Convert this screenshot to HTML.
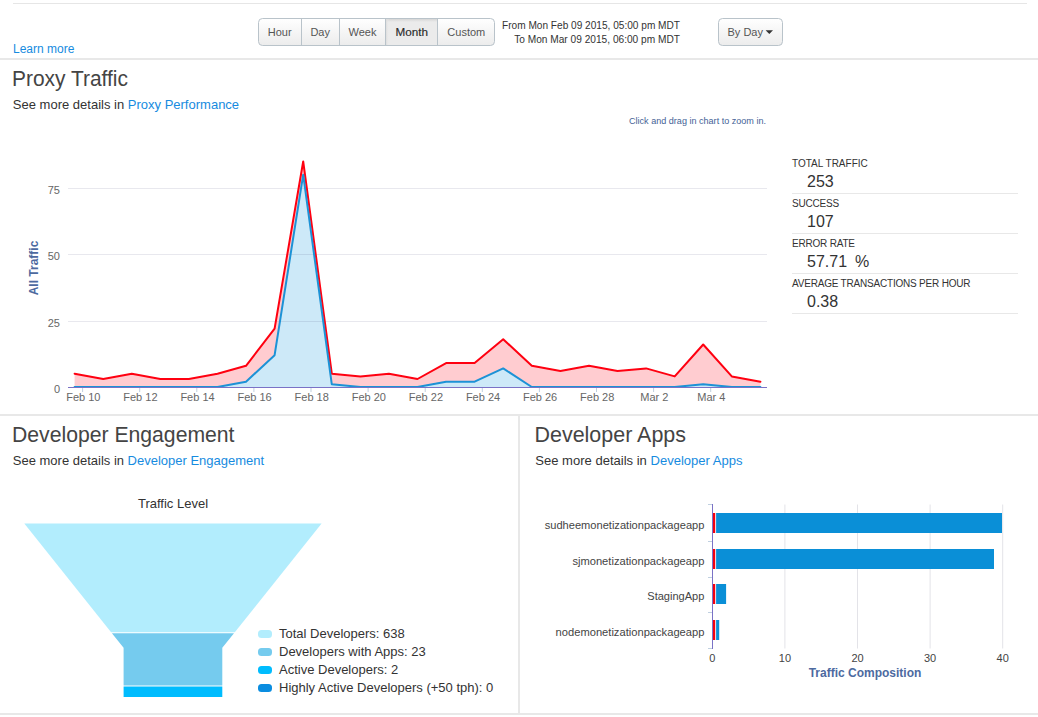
<!DOCTYPE html>
<html><head><meta charset="utf-8">
<style>
html,body{margin:0;padding:0;background:#fff;width:1038px;height:717px;overflow:hidden}
svg{display:block;font-family:"Liberation Sans",sans-serif}
.t{fill:#333}
.lk{fill:#168be0}
</style></head><body>
<svg width="1038" height="717" viewBox="0 0 1038 717">
<defs>
<linearGradient id="btn" x1="0" y1="0" x2="0" y2="1">
<stop offset="0" stop-color="#ffffff"/><stop offset="1" stop-color="#ececec"/>
</linearGradient>
<linearGradient id="btnA" x1="0" y1="0" x2="0" y2="1">
<stop offset="0" stop-color="#e4e4e4"/><stop offset="1" stop-color="#efefef"/>
</linearGradient>
<linearGradient id="shT" x1="0" y1="0" x2="0" y2="1"><stop offset="0" stop-color="#d6d6d6"/><stop offset="1" stop-color="#ebebeb"/></linearGradient>
<linearGradient id="shL" x1="0" y1="0" x2="1" y2="0"><stop offset="0" stop-color="#dcdcdc"/><stop offset="1" stop-color="#ebebeb" stop-opacity="0"/></linearGradient>
</defs>

<!-- page lines -->
<rect x="13" y="3" width="1014" height="1" fill="#e6e6e6"/>
<rect x="0" y="58" width="1038" height="2" fill="#e8e8e8"/>
<rect x="0" y="414" width="1038" height="2" fill="#e8e8e8"/>
<rect x="518" y="416" width="2" height="297" fill="#e8e8e8"/>
<rect x="0" y="713" width="1038" height="2" fill="#e8e8e8"/>

<text x="13" y="53" font-size="12" class="lk">Learn more</text>

<!-- button group -->
<g id="btns">
<rect x="258.5" y="18.5" width="236" height="27" rx="4" fill="url(#btn)" stroke="#b9c3ca"/>
<rect x="386" y="19" width="51" height="26" fill="#ebebeb"/>
<rect x="386" y="19" width="51" height="3" fill="url(#shT)"/>
<rect x="386" y="19" width="3" height="26" fill="url(#shL)"/>
<rect x="301" y="18" width="1" height="28" fill="#b9c3ca"/>
<rect x="339" y="18" width="1" height="28" fill="#b9c3ca"/>
<rect x="385" y="18" width="1" height="28" fill="#b9c3ca"/>
<rect x="437" y="18" width="1" height="28" fill="#b9c3ca"/>
<text x="279.7" y="35.5" font-size="11" fill="#555" text-anchor="middle">Hour</text>
<text x="320.2" y="35.5" font-size="11" fill="#555" text-anchor="middle">Day</text>
<text x="362.5" y="35.5" font-size="11" fill="#555" text-anchor="middle">Week</text>
<text x="395.6" y="35.7" font-size="11" fill="#2a2a2a" stroke="#2a2a2a" stroke-width="0.15" textLength="32.5" lengthAdjust="spacingAndGlyphs">Month</text>
<text x="466.3" y="35.5" font-size="11" fill="#555" text-anchor="middle">Custom</text>
</g>

<text x="502" y="28.5" font-size="10" class="t" textLength="178" lengthAdjust="spacingAndGlyphs">From Mon Feb 09 2015, 05:00 pm MDT</text>
<text x="514.2" y="42.5" font-size="10" class="t" textLength="165.8" lengthAdjust="spacingAndGlyphs">To Mon Mar 09 2015, 06:00 pm MDT</text>

<rect x="718.5" y="18.5" width="64" height="27" rx="4" fill="url(#btn)" stroke="#b9c3ca"/>
<text x="727.5" y="35.5" font-size="11" fill="#555">By Day</text>
<path d="M765.6 30.3 L773 30.3 L769.3 34 Z" fill="#333"/>

<!-- Proxy traffic -->
<text x="12" y="85.8" font-size="22" fill="#444" textLength="116" lengthAdjust="spacingAndGlyphs">Proxy Traffic</text>
<text x="12.8" y="108.9" font-size="13.6" class="t" textLength="226.3" lengthAdjust="spacingAndGlyphs">See more details in <tspan class="lk">Proxy Performance</tspan></text>

<g id="chart1">
<path d="M74.6 373.7 L103.2 379.0 L131.8 373.7 L160.3 379.0 L188.9 379.0 L217.5 373.7 L246.0 365.8 L274.6 328.6 L303.2 161.5 L331.8 373.7 L360.4 376.4 L388.9 373.7 L417.5 379.0 L446.1 363.1 L474.6 363.1 L503.2 339.2 L531.8 365.8 L560.4 371.1 L589.0 365.8 L617.5 371.1 L646.1 368.4 L674.7 376.4 L703.2 344.5 L731.8 376.4 L760.4 381.7 L760.4 387.0 L731.8 387.0 L703.2 384.3 L674.7 387.0 L646.1 387.0 L617.5 387.0 L589.0 387.0 L560.4 387.0 L531.8 387.0 L503.2 368.4 L474.6 381.7 L446.1 381.7 L417.5 387.0 L388.9 387.0 L360.4 387.0 L331.8 384.3 L303.2 174.7 L274.6 355.2 L246.0 381.7 L217.5 387.0 L188.9 387.0 L160.3 387.0 L131.8 387.0 L103.2 387.0 L74.6 387.0 Z" fill="#ffccd0"/>
<path d="M74.6 387.0 L103.2 387.0 L131.8 387.0 L160.3 387.0 L188.9 387.0 L217.5 387.0 L246.0 381.7 L274.6 355.2 L303.2 174.7 L331.8 384.3 L360.4 387.0 L388.9 387.0 L417.5 387.0 L446.1 381.7 L474.6 381.7 L503.2 368.4 L531.8 387.0 L560.4 387.0 L589.0 387.0 L617.5 387.0 L646.1 387.0 L674.7 387.0 L703.2 384.3 L731.8 387.0 L760.4 387.0 L760.4 387 L74.6 387 Z" fill="#cde9f8"/>
<rect x="68" y="188" width="699" height="1" fill="#1e1e5a" fill-opacity="0.1"/>
<rect x="68" y="254" width="699" height="1" fill="#1e1e5a" fill-opacity="0.1"/>
<rect x="68" y="321" width="699" height="1" fill="#1e1e5a" fill-opacity="0.1"/>
<path d="M74.6 373.7 L103.2 379.0 L131.8 373.7 L160.3 379.0 L188.9 379.0 L217.5 373.7 L246.0 365.8 L274.6 328.6 L303.2 161.5 L331.8 373.7 L360.4 376.4 L388.9 373.7 L417.5 379.0 L446.1 363.1 L474.6 363.1 L503.2 339.2 L531.8 365.8 L560.4 371.1 L589.0 365.8 L617.5 371.1 L646.1 368.4 L674.7 376.4 L703.2 344.5 L731.8 376.4 L760.4 381.7" fill="none" stroke="#ff0010" stroke-width="2" stroke-linejoin="round" stroke-linecap="round"/>
<path d="M74.6 387.0 L103.2 387.0 L131.8 387.0 L160.3 387.0 L188.9 387.0 L217.5 387.0 L246.0 381.7 L274.6 355.2 L303.2 174.7 L331.8 384.3 L360.4 387.0 L388.9 387.0 L417.5 387.0 L446.1 381.7 L474.6 381.7 L503.2 368.4 L531.8 387.0 L560.4 387.0 L589.0 387.0 L617.5 387.0 L646.1 387.0 L674.7 387.0 L703.2 384.3 L731.8 387.0 L760.4 387.0" fill="none" stroke="#1c92d6" stroke-width="2" stroke-linejoin="round" stroke-linecap="round"/>
<rect x="68" y="387" width="699" height="1" fill="#7a72c6"/>
<rect x="82.1" y="388" width="1" height="4" fill="#c0d0e0"/>
<text x="83.3" y="401" font-size="11" fill="#666" text-anchor="middle">Feb 10</text>
<rect x="139.2" y="388" width="1" height="4" fill="#c0d0e0"/>
<text x="140.4" y="401" font-size="11" fill="#666" text-anchor="middle">Feb 12</text>
<rect x="196.3" y="388" width="1" height="4" fill="#c0d0e0"/>
<text x="197.5" y="401" font-size="11" fill="#666" text-anchor="middle">Feb 14</text>
<rect x="253.4" y="388" width="1" height="4" fill="#c0d0e0"/>
<text x="254.6" y="401" font-size="11" fill="#666" text-anchor="middle">Feb 16</text>
<rect x="310.5" y="388" width="1" height="4" fill="#c0d0e0"/>
<text x="311.7" y="401" font-size="11" fill="#666" text-anchor="middle">Feb 18</text>
<rect x="367.6" y="388" width="1" height="4" fill="#c0d0e0"/>
<text x="368.8" y="401" font-size="11" fill="#666" text-anchor="middle">Feb 20</text>
<rect x="424.7" y="388" width="1" height="4" fill="#c0d0e0"/>
<text x="425.9" y="401" font-size="11" fill="#666" text-anchor="middle">Feb 22</text>
<rect x="481.8" y="388" width="1" height="4" fill="#c0d0e0"/>
<text x="483.0" y="401" font-size="11" fill="#666" text-anchor="middle">Feb 24</text>
<rect x="538.9" y="388" width="1" height="4" fill="#c0d0e0"/>
<text x="540.1" y="401" font-size="11" fill="#666" text-anchor="middle">Feb 26</text>
<rect x="596.0" y="388" width="1" height="4" fill="#c0d0e0"/>
<text x="597.2" y="401" font-size="11" fill="#666" text-anchor="middle">Feb 28</text>
<rect x="653.1" y="388" width="1" height="4" fill="#c0d0e0"/>
<text x="654.3" y="401" font-size="11" fill="#666" text-anchor="middle">Mar 2</text>
<rect x="710.2" y="388" width="1" height="4" fill="#c0d0e0"/>
<text x="711.4" y="401" font-size="11" fill="#666" text-anchor="middle">Mar 4</text>
<text x="60" y="194" font-size="11" fill="#666" text-anchor="end">75</text>
<text x="60" y="260" font-size="11" fill="#666" text-anchor="end">50</text>
<text x="60" y="327" font-size="11" fill="#666" text-anchor="end">25</text>
<text x="60" y="393" font-size="11" fill="#666" text-anchor="end">0</text>
<text transform="translate(38,268) rotate(-90)" font-size="12" font-weight="bold" fill="#4d6a9f" text-anchor="middle">All Traffic</text>
<text x="629" y="124" font-size="9" fill="#455f96" textLength="137" lengthAdjust="spacingAndGlyphs">Click and drag in chart to zoom in.</text>
</g>
<g id="stats">
<text x="792" y="167" font-size="10" class="t">TOTAL TRAFFIC</text>
<text x="807" y="187" font-size="16" class="t">253</text>
<rect x="792" y="193" width="226" height="1" fill="#e8e8e8"/>
<text x="792" y="207" font-size="10" class="t" letter-spacing="-0.2">SUCCESS</text>
<text x="807" y="227" font-size="16" class="t">107</text>
<rect x="792" y="233" width="226" height="1" fill="#e8e8e8"/>
<text x="792" y="247" font-size="10" class="t" letter-spacing="-0.2">ERROR RATE</text>
<text x="807" y="267" font-size="16" class="t">57.71</text>
<text x="855" y="267" font-size="16" class="t">%</text>
<rect x="792" y="273" width="226" height="1" fill="#e8e8e8"/>
<text x="792" y="287" font-size="10" class="t" letter-spacing="-0.2">AVERAGE TRANSACTIONS PER HOUR</text>
<text x="807" y="307" font-size="16" class="t">0.38</text>
<rect x="792" y="313" width="226" height="1" fill="#e8e8e8"/>
</g>

<!-- Developer engagement -->
<text x="12" y="442" font-size="22" fill="#444" textLength="222.5" lengthAdjust="spacingAndGlyphs">Developer Engagement</text>
<text x="12.8" y="465" font-size="13.6" class="t" textLength="251.3" lengthAdjust="spacingAndGlyphs">See more details in <tspan class="lk">Developer Engagement</tspan></text>
<g id="funnel">
<text x="173" y="508" font-size="13" class="t" text-anchor="middle">Traffic Level</text>
<path d="M24.3 523.4 L321.6 523.4 L234.8 632.2 L111.1 632.2 Z" fill="#b2edfd"/>
<path d="M111.9 633.2 L234.0 633.2 L222.3 647.8 L222.3 685.5 L123.6 685.5 L123.6 647.8 Z" fill="#75cbee"/>
<path d="M123.6 686.5 L222.3 686.5 L222.3 697.0 L123.6 697.0 Z" fill="#00bcfe"/>
<rect x="258" y="630" width="14" height="8" rx="3.5" fill="#b2edfd"/>
<text x="279" y="638" font-size="13" class="t">Total Developers: 638</text>
<rect x="258" y="648" width="14" height="8" rx="3.5" fill="#75cbee"/>
<text x="279" y="656" font-size="13" class="t">Developers with Apps: 23</text>
<rect x="258" y="666" width="14" height="8" rx="3.5" fill="#00bcfe"/>
<text x="279" y="674" font-size="13" class="t">Active Developers: 2</text>
<rect x="258" y="684" width="14" height="8" rx="3.5" fill="#0a8de0"/>
<text x="279" y="692" font-size="13" class="t">Highly Active Developers (+50 tph): 0</text>
</g>

<!-- Developer apps -->
<text x="534.5" y="442" font-size="22" fill="#444" textLength="151.5" lengthAdjust="spacingAndGlyphs">Developer Apps</text>
<text x="535.3" y="465" font-size="13.6" class="t" textLength="207.2" lengthAdjust="spacingAndGlyphs">See more details in <tspan class="lk">Developer Apps</tspan></text>
<g id="bars">
<rect x="784.4" y="504.5" width="1" height="144" fill="#e3e3e8"/>
<rect x="857.0" y="504.5" width="1" height="144" fill="#e3e3e8"/>
<rect x="929.6" y="504.5" width="1" height="144" fill="#e3e3e8"/>
<rect x="1002.2" y="504.5" width="1" height="144" fill="#e3e3e8"/>
<rect x="712.8" y="513" width="2.4" height="20" fill="#f20010"/>
<rect x="716.1" y="513" width="285.9" height="20" fill="#0a8fd7"/>
<text x="544.7" y="529.2" font-size="11" fill="#444" textLength="159.7" lengthAdjust="spacingAndGlyphs">sudheemonetizationpackageapp</text>
<rect x="712.8" y="549" width="2.4" height="20" fill="#f20010"/>
<rect x="716.1" y="549" width="277.9" height="20" fill="#0a8fd7"/>
<text x="572.4" y="565.2" font-size="11" fill="#444" textLength="132.0" lengthAdjust="spacingAndGlyphs">sjmonetizationpackageapp</text>
<rect x="712.8" y="584" width="2.4" height="20" fill="#f20010"/>
<rect x="716.1" y="584" width="10.0" height="20" fill="#0a8fd7"/>
<text x="647.3" y="600.2" font-size="11" fill="#444" textLength="57.1" lengthAdjust="spacingAndGlyphs">StagingApp</text>
<rect x="712.8" y="620" width="2.4" height="20" fill="#f20010"/>
<rect x="716.1" y="620" width="3.1" height="20" fill="#0a8fd7"/>
<text x="555.6" y="636.2" font-size="11" fill="#444" textLength="148.8" lengthAdjust="spacingAndGlyphs">nodemonetizationpackageapp</text>
<rect x="708" y="504" width="4.5" height="1" fill="#c0d0e0"/>
<rect x="708" y="541" width="4.5" height="1" fill="#c0d0e0"/>
<rect x="708" y="577" width="4.5" height="1" fill="#c0d0e0"/>
<rect x="708" y="612" width="4.5" height="1" fill="#c0d0e0"/>
<rect x="708" y="648" width="4.5" height="1" fill="#c0d0e0"/>
<rect x="712" y="504" width="1" height="145" fill="#7a72c6"/>
<text x="712.3" y="662" font-size="11" fill="#444" text-anchor="middle">0</text>
<text x="784.9" y="662" font-size="11" fill="#444" text-anchor="middle">10</text>
<text x="857.5" y="662" font-size="11" fill="#444" text-anchor="middle">20</text>
<text x="930.1" y="662" font-size="11" fill="#444" text-anchor="middle">30</text>
<text x="1002.7" y="662" font-size="11" fill="#444" text-anchor="middle">40</text>
<text x="865" y="677" font-size="12" font-weight="bold" fill="#4d6a9f" text-anchor="middle">Traffic Composition</text>
</g>
</svg>
</body></html>
